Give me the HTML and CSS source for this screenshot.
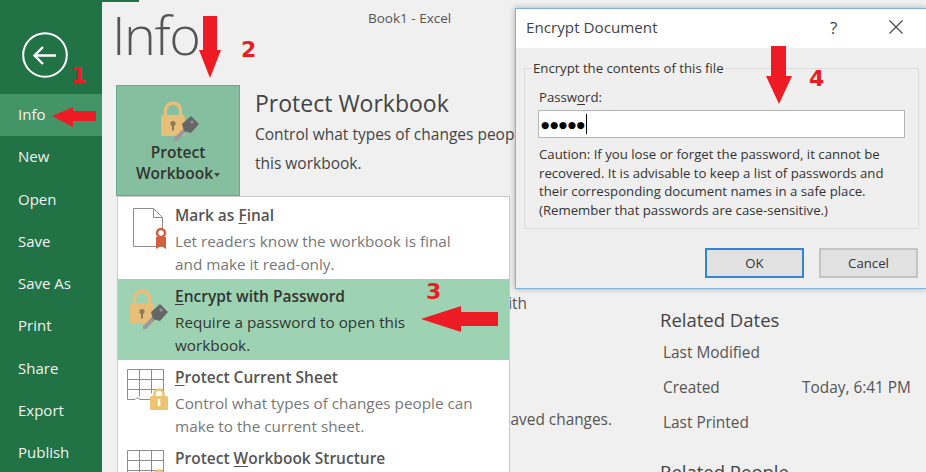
FILE: index.html
```html
<!DOCTYPE html>
<html lang="en">
<head>
    <meta charset="UTF-8">
    <title>Book1 - Excel</title>
    <link rel="stylesheet" href="styles.css">
</head>
<body>
    <svg width="0" height="0" class="defs">
        <symbol id="lockkey" viewBox="0 0 40 42">
            <path d="M4.500 16V10.500a7.500 7.500 0 0 1 15 0V16" fill="none" stroke="#e8bf7a" stroke-width="3.500"/>
            <rect x="0" y="15" width="24" height="21" rx="2" fill="#e8bf7a"/>
            <circle cx="12" cy="23.500" r="2.600" fill="#8a7d5c"/>
            <rect x="11" y="24" width="2" height="6.500" fill="#8a7d5c"/>
            <path d="M13 38l11-11 3 3-11 11h-3z" fill="#9a9a9a"/>
            <path d="M21 24l9-8 8 8-8 9-7-2z" fill="#666"/>
            <circle cx="31" cy="22" r="1.500" fill="#999"/>
        </symbol>
        <symbol id="gridsheet" viewBox="0 0 42 42">
            <path d="M23 30.500H13l-3-2-2 2H.500V.500h36V22M.500 10.500h36M.500 20.500h36M12.500.500v27M24.500.500v24" fill="none" stroke="#8c8c8c"/>
            <path d="M27.500 28v-3a4.500 4.500 0 0 1 9 0v3" fill="none" stroke="#eec36f" stroke-width="2.500"/>
            <rect x="23" y="27" width="18" height="14" rx="1.500" fill="#eec36f"/>
            <rect x="30.800" y="30" width="2.500" height="7" fill="#fff"/>
        </symbol>
    </svg>

    <div class="app">
        <nav class="sidebar">
            <div class="back">
                <svg width="46" height="46" viewBox="0 0 46 46">
                    <circle cx="23" cy="23" r="21.800" fill="none" stroke="#fff" stroke-width="2"/>
                    <path d="M13 23.500h21M21 15l-8.500 8.500 8.500 8.500" fill="none" stroke="#fff" stroke-width="2.400"/>
                </svg>
            </div>
            <a class="nav-item active">Info</a>
            <a class="nav-item">New</a>
            <a class="nav-item">Open</a>
            <a class="nav-item">Save</a>
            <a class="nav-item">Save As</a>
            <a class="nav-item">Print</a>
            <a class="nav-item">Share</a>
            <a class="nav-item">Export</a>
            <a class="nav-item">Publish</a>
        </nav>

        <main class="main">
            <div class="top-strip"></div>
            <header class="head">
                <h1 class="page-title">Info</h1>
                <div class="book-title">Book1 - Excel</div>
            </header>
            <div class="columns">
                <section class="left-col">
                    <div class="protect">
                        <div class="protect-btn">
                            <svg class="protect-icon" width="40" height="42"><use href="#lockkey"/></svg>
                            <div class="protect-label">Protect<br>Workbook <span class="caret"></span></div>
                        </div>
                        <div class="protect-info">
                            <h2>Protect Workbook</h2>
                            <p>Control what types of changes people can</p>
                            <p>this workbook.</p>
                        </div>
                    </div>
                    <div class="behind behind-one"><p>author's name and path with</p></div>
                    <div class="behind behind-two"><p>versions with unsaved changes.</p></div>
                </section>
                <aside class="right-col">
                    <h3>Related Dates</h3>
                    <div class="date-row"><span>Last Modified</span></div>
                    <div class="date-row"><span>Created</span><span>Today, 6:41 PM</span></div>
                    <div class="date-row"><span>Last Printed</span></div>
                    <h3 class="people">Related People</h3>
                </aside>
            </div>

            <div class="menu">
                <div class="menu-item">
                    <div class="menu-icon icon-doc">
                        <svg width="40" height="44" viewBox="0 0 40 44">
                            <path d="M5.500 1.500h20l9 9v29h-29zM25.500 1.500v9h9" fill="#fff" stroke="#8c8c8c"/>
                            <circle cx="33" cy="26" r="4" fill="#fff" stroke="#d2603e" stroke-width="2.500"/>
                            <path d="M28 30h10v12l-5-3-5 3z" fill="#d2603e"/>
                        </svg>
                    </div>
                    <div class="menu-text">
                        <b><span>Mark as <u>F</u>inal</span></b>
                        <p>Let readers know the workbook is final<br>and make it read-only.</p>
                    </div>
                </div>
                <div class="menu-item selected">
                    <div class="menu-icon icon-lock">
                        <svg width="40" height="42"><use href="#lockkey"/></svg>
                    </div>
                    <div class="menu-text">
                        <b><span><u>E</u>ncrypt with Password</span></b>
                        <p>Require a password to open this<br>workbook.</p>
                    </div>
                </div>
                <div class="menu-item">
                    <div class="menu-icon">
                        <svg width="42" height="42"><use href="#gridsheet"/></svg>
                    </div>
                    <div class="menu-text">
                        <b><span><u>P</u>rotect Current Sheet</span></b>
                        <p>Control what types of changes people can<br>make to the current sheet.</p>
                    </div>
                </div>
                <div class="menu-item">
                    <div class="menu-icon">
                        <svg width="42" height="42"><use href="#gridsheet"/></svg>
                    </div>
                    <div class="menu-text">
                        <b><span>Protect <u>W</u>orkbook Structure</span></b>
                    </div>
                </div>
            </div>
        </main>
    </div>

    <div class="dialog">
        <div class="dialog-title">
            <span class="dialog-name">Encrypt Document</span>
            <span class="dialog-help">?</span>
            <svg width="14" height="14" viewBox="0 0 14 14"><path d="M.500.500l13 13M13.500.500l-13 13" stroke="#444" stroke-width="1.100"/></svg>
        </div>
        <div class="dialog-body">
            <fieldset class="group">
                <legend>Encrypt the contents of this file</legend>
                <label class="pw-label">Passw<u>o</u>rd:</label>
                <div class="pw-input"><span class="dots">●●●●●</span><span class="cursor"></span></div>
                <p class="caution">Caution: If you lose or forget the password, it cannot be recovered. It is advisable to keep a list of passwords and their corresponding document names in a safe place. (Remember that passwords are case-sensitive.)</p>
            </fieldset>
            <div class="dialog-buttons">
                <button class="btn btn-default">OK</button>
                <button class="btn">Cancel</button>
            </div>
        </div>
    </div>

    <!-- red annotations -->
    <svg class="arrows" width="926" height="472" viewBox="0 0 926 472">
        <path d="M52 116l21-9v4l23 0v10l-23 0v6z"/>
        <path d="M203 16h14v34h4l-11 28-11-28h4z"/>
        <path d="M421 319l40-13v6h37v14h-37v6z"/>
        <path d="M771 46h15v30h6l-13 28-13-28h5z"/>
    </svg>
    <span class="step step-1">1</span>
    <span class="step step-2">2</span>
    <span class="step step-3">3</span>
    <span class="step step-4">4</span>
</body>
</html>
```

FILE: styles.css
```css
body {
    margin: 0;
    width: 926px;
    height: 472px;
    overflow: hidden;
    position: relative;
    background: #f0f0f0;
    font-family: 'Open Sans', Arial, sans-serif;
    color: #444;
}
p, h1, h2, h3 {
    margin: 0;
    font-weight: 400;
}
.defs {
    position: absolute;
}
.app {
    display: flex;
    height: 472px;
    overflow: hidden;
}

/* backstage nav */
.sidebar {
    width: 102px;
    flex: none;
    height: 472px;
    overflow: hidden;
    background: #217346;
    color: #f2f2f2;
    font-size: 15px;
}
.back {
    height: 94px;
    box-sizing: border-box;
    padding: 32px 0 0 22px;
}
.nav-item {
    display: flex;
    align-items: center;
    height: 42.250px;
    box-sizing: border-box;
    padding: 0 0 2px 18px;
}
.nav-item.active {
    background: #439467;
}

.main {
    flex: 1;
    position: relative;
}
.top-strip {
    height: 2px;
    width: 37px;
    margin-bottom: -2px;
    background: #217346;
}
.head {
    display: flex;
    height: 85px;
}
.page-title {
    font-size: 54px;
    line-height: 68px;
    width: 256px;
    padding-left: 10px;
    color: #555;
    font-weight: 300;
    letter-spacing: -1.500px;
}
.book-title {
    font-size: 13.500px;
    padding-top: 9px;
    color: #555;
}
.columns {
    display: flex;
}
.left-col {
    width: 558px;
    flex: none;
    padding-left: 14px;
    box-sizing: border-box;
    font-size: 15.400px;
}
.protect {
    display: flex;
    height: 111px;
}
.protect-btn {
    width: 124px;
    flex: none;
    box-sizing: border-box;
    background: #86bf9f;
    border: 1px solid #6aa987;
    text-align: center;
    padding-top: 14px;
    color: #333;
}
.protect-icon {
    display: block;
    margin-left: 44px;
}
.protect-label {
    font-size: 15.500px;
    font-weight: 600;
    line-height: 21px;
    margin-top: 0;
}
.caret {
    display: inline-block;
    margin-left: -3px;
    border: 3px solid transparent;
    border-top: 4px solid #444;
    border-bottom: 0;
    vertical-align: middle;
}
.protect-info {
    padding: 2px 0 0 15px;
    white-space: nowrap;
    overflow: hidden;
}
.protect-info h2 {
    font-size: 23px;
    line-height: 33px;
    color: #444;
}
.protect-info p {
    font-size: 15.500px;
    line-height: 29px;
}
.behind {
    display: flex;
    justify-content: flex-end;
    white-space: nowrap;
    overflow: hidden;
    color: #555;
}
.behind-one {
    width: 411px;
    margin-top: 97px;
}
.behind-two {
    width: 496px;
    margin-top: 95px;
}
.right-col {
    padding-top: 220px;
    font-size: 15.400px;
    color: #555;
    flex: 1;
}
.right-col h3 {
    font-size: 18.500px;
    line-height: 30px;
    color: #444;
}
.date-row {
    display: flex;
    padding-left: 3px;
    height: 35px;
    align-items: center;
    margin-top: 0;
}
.date-row span:first-child {
    width: 139px;
}
.people {
    margin-top: 17px;
}

/* dropdown over the page */
.menu {
    position: absolute;
    left: 15px;
    top: 196px;
    width: 393px;
    height: 276px;
    box-sizing: border-box;
    overflow: hidden;
    background: #fff;
    border: 1px solid #c9c9c9;
    border-bottom: 0;
    padding-top: 1px;
}
.menu-item {
    display: flex;
    height: 81px;
}
.menu-item.selected {
    background: #9dd3b2;
}
.menu-icon {
    width: 57px;
    flex: none;
    padding: 9px 0 0 9px;
    box-sizing: border-box;
}
.icon-doc {
    padding-left: 10px;
}
.icon-lock {
    padding-left: 12px;
}
.menu-text {
    font-size: 15.300px;
    line-height: 23px;
    color: #777;
}
.menu-text b {
    display: block;
    font-size: 15.500px;
    font-weight: 600;
    line-height: 26px;
    padding-top: 4px;
    color: #555;
}
.menu-text p {
    padding-top: 2px;
}
.selected .menu-text, .selected .menu-text b {
    color: #333;
}
.menu-text u, .pw-label u {
    text-underline-offset: 2px;
}

/* encrypt dialog */
.dialog {
    position: absolute;
    left: 515px;
    top: 8px;
    width: 411px;
    height: 281px;
    box-sizing: border-box;
    background: #efefef;
    border: 1px solid #7fb2dd;
    border-right: 0;
    box-shadow: 0 0 6px rgba(0,0,0,0.3);
}
.dialog-title {
    display: flex;
    align-items: center;
    height: 39px;
    box-sizing: border-box;
    background: #fff;
    padding: 0 0 3px 10px;
    font-size: 15.200px;
}
.dialog-name {
    width: 304px;
}
.dialog-help {
    width: 59px;
    font-size: 17px;
}
.dialog-body {
    padding: 11px 7px 0 8px;
    font-size: 13.200px;
    color: #333;
}
.group {
    margin: 0;
    height: 170px;
    box-sizing: border-box;
    border: 1px solid #dcdcdc;
    padding: 0 13px 0 14px;
}
.group legend {
    padding: 0 1px;
    margin-left: -7px;
    line-height: 18px;
}
.pw-label {
    display: block;
    margin-top: 11px;
    line-height: 18px;
}
.pw-input {
    display: flex;
    align-items: center;
    height: 28px;
    margin: 4px 0 7px -1px;
    box-sizing: border-box;
    background: #fff;
    border: 1px solid #b4b4b4;
    padding-left: 2px;
}
.dots {
    font-family: 'DejaVu Sans', sans-serif;
    font-size: 9.400px;
    color: #000;
    letter-spacing: 0.700px;
    margin-right: 1px;
}
.cursor {
    width: 1px;
    height: 20px;
    background: #000;
}
.caution {
    line-height: 18.700px;
}
.dialog-buttons {
    display: flex;
    justify-content: flex-end;
    gap: 15px;
    padding: 19px 1px 0 0;
}
.btn {
    width: 99px;
    height: 30px;
    padding: 0;
    background: #e1e1e1;
    border: 2px solid #c4c4c4;
    font: 13.200px 'Open Sans', Arial, sans-serif;
    color: #333;
}
.btn-default {
    border-color: #2f86d6;
}

/* red annotations */
.arrows {
    position: absolute;
    left: 0;
    top: 0;
    fill: #ed1c24;
    pointer-events: none;
}
.step {
    position: absolute;
    font-family: 'DejaVu Sans', sans-serif;
    font-size: 22px;
    line-height: 26px;
    font-weight: 700;
    color: #ed1c24;
}
.step-1 { left: 71px; top: 63px; }
.step-2 { left: 241px; top: 37px; }
.step-3 { left: 426px; top: 279px; }
.step-4 { left: 809px; top: 66px; }
```
